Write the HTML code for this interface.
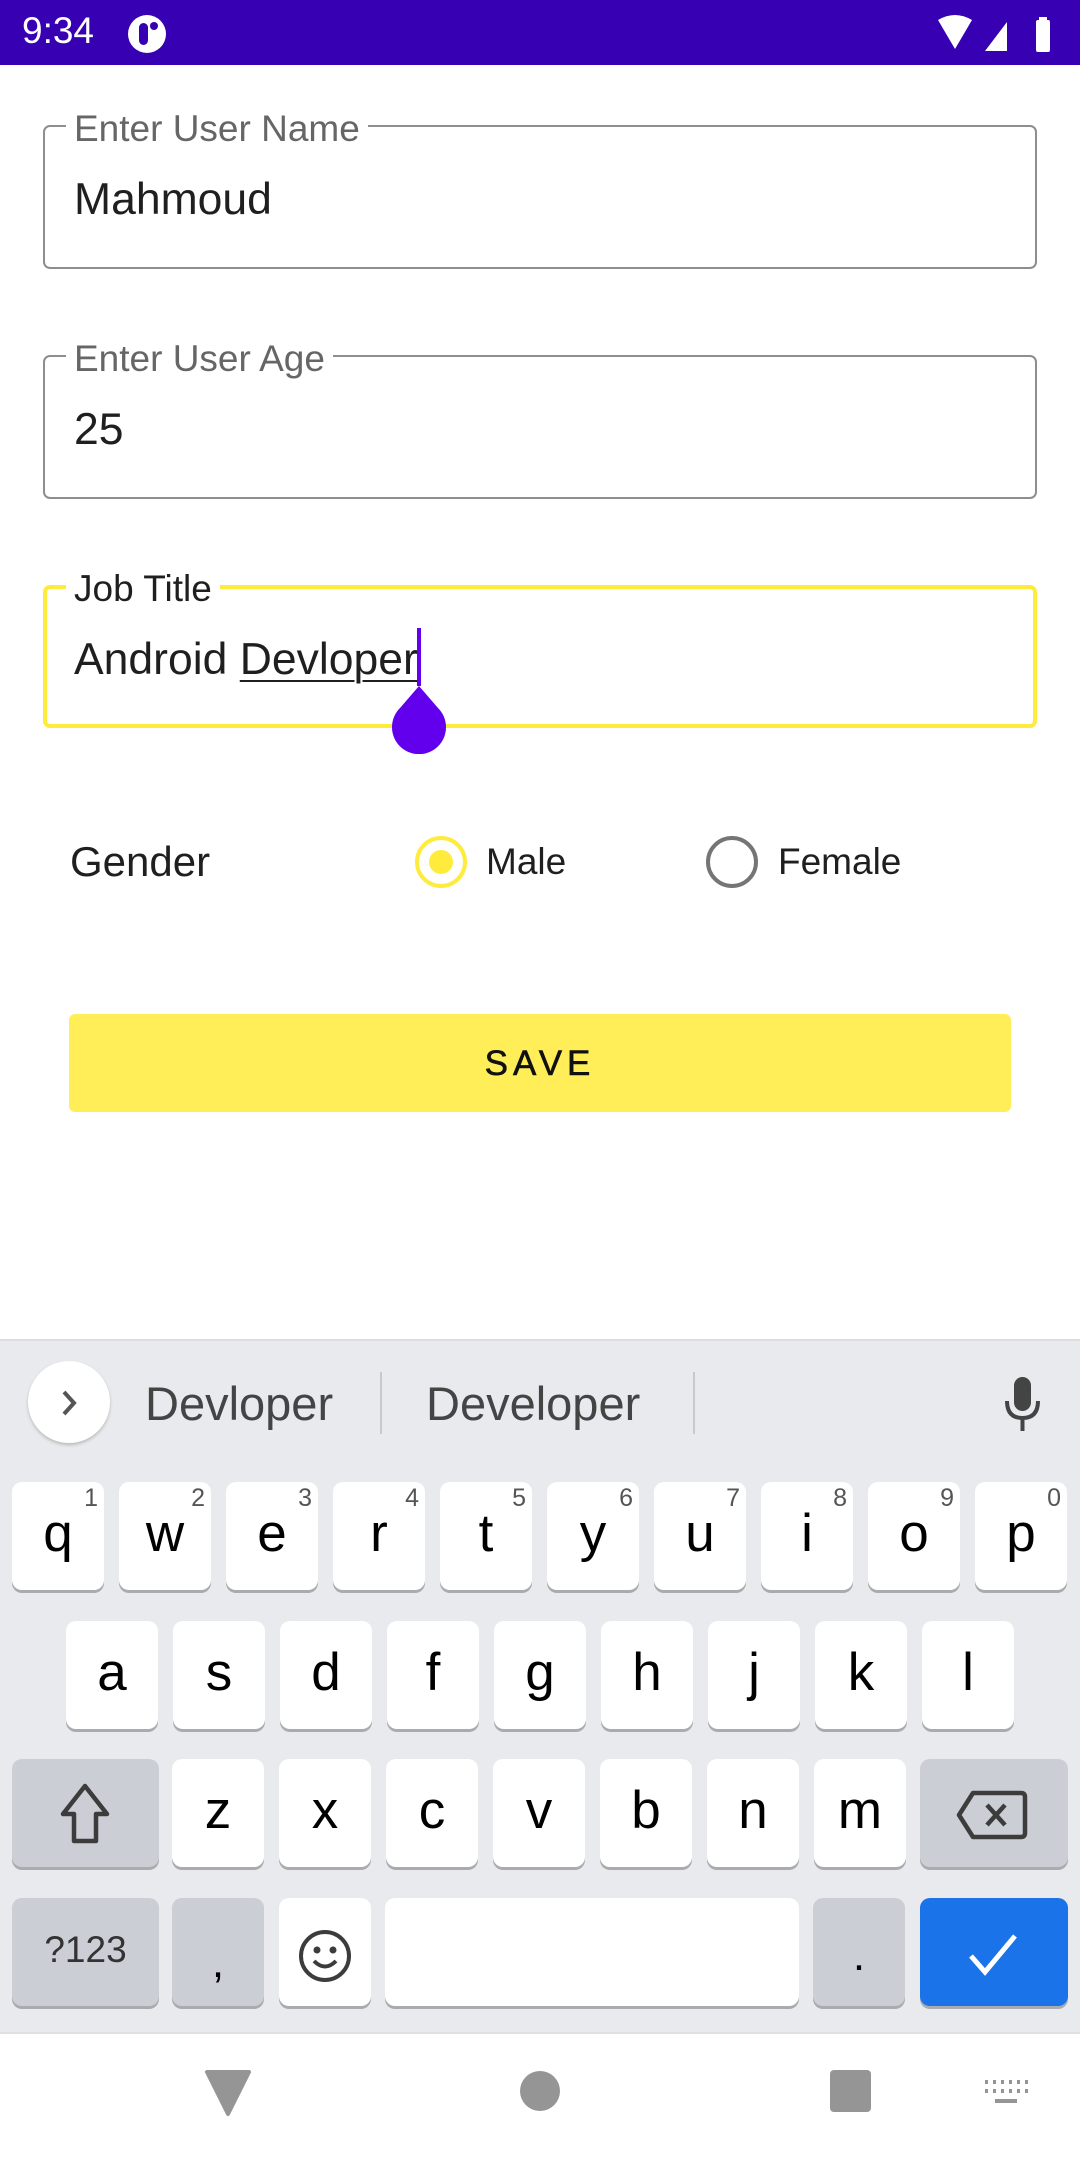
<!DOCTYPE html>
<html><head><meta charset="utf-8"><style>
*{margin:0;padding:0;box-sizing:border-box}
body{width:1080px;height:2160px;position:relative;background:#fff;font-family:"Liberation Sans",sans-serif;overflow:hidden}
.a{position:absolute}
.sb{left:0;top:0;width:1080px;height:65px;background:#3700B3}
.fld{left:43px;width:994px;height:144px;border:2.5px solid #8e8e8e;border-radius:7px}
.lbl{background:#fff;padding:0 8px;font-size:37px;color:#666;line-height:36px}
.val{font-size:44.5px;color:#1f1f1f;line-height:44px}
.kb{left:0;top:1339px;width:1080px;height:693px;background:#E8EAED;border-top:2px solid #dcdde0}
.k{background:#fff;border-radius:10px;box-shadow:0 3px 0 #a9abaf;height:108px;text-align:center;font-size:53px;line-height:104px;color:#000}
.k sup{position:absolute;right:6px;top:4px;font-size:25px;line-height:24px;color:#555}
.g{background:#CBCED4}
</style></head><body>
<div class="a sb"></div>
<div class="a" style="left:22px;top:11px;font-size:37px;color:#fff;line-height:40px">9:34</div>
<div class="a" style="left:128px;top:15px;width:38px;height:38px;border-radius:50%;background:#fff"></div>
<div class="a" style="left:139px;top:23px;width:9px;height:22px;border-radius:5px;background:#3700B3"></div>
<div class="a" style="left:150px;top:22px;width:8px;height:8px;border-radius:50%;background:#3700B3"></div>
<svg class="a" style="left:935px;top:14px" width="130" height="40"><path d="M3 6 Q20 -4 37 6 L20 35 Z" fill="#fff"/><path d="M50 37 L72 8 L72 37 Z" fill="#fff"/><rect x="101" y="6" width="14" height="32" rx="2" fill="#fff"/><rect x="104" y="3" width="8" height="4" fill="#fff"/></svg>

<div class="a fld" style="top:125px"></div>
<div class="a lbl" style="left:66px;top:111px">Enter User Name</div>
<div class="a val" style="left:74px;top:178px">Mahmoud</div>

<div class="a fld" style="top:355px"></div>
<div class="a lbl" style="left:66px;top:341px">Enter User Age</div>
<div class="a val" style="left:74px;top:408px">25</div>

<div class="a fld" style="top:585px;border:4px solid #FFEB3B;height:143px"></div>
<div class="a lbl" style="left:66px;top:571px;color:#1f1f1f">Job Title</div>
<div class="a val" style="left:74px;top:638px">Android <span style="text-decoration:underline;text-decoration-thickness:2px;text-underline-offset:6px">Devloper</span></div>
<div class="a" style="left:417px;top:628px;width:4px;height:58px;background:#6200EE"></div>
<svg class="a" style="left:390px;top:684px" width="58" height="70"><path d="M29 2 L48 24 A27 27 0 1 1 10 24 Z" fill="#6200EE"/></svg>

<div class="a" style="left:70px;top:840px;font-size:42px;color:#1f1f1f;line-height:44px">Gender</div>
<div class="a" style="left:415px;top:836px;width:52px;height:52px;border:4px solid #FFEB3B;border-radius:50%"></div>
<div class="a" style="left:429px;top:850px;width:24px;height:24px;background:#FFEB3B;border-radius:50%"></div>
<div class="a" style="left:486px;top:842px;font-size:37px;color:#1f1f1f;line-height:40px">Male</div>
<div class="a" style="left:706px;top:836px;width:52px;height:52px;border:4px solid #757575;border-radius:50%"></div>
<div class="a" style="left:778px;top:842px;font-size:37px;color:#1f1f1f;line-height:40px">Female</div>

<div class="a" style="left:69px;top:1014px;width:942px;height:98px;background:#FFEE58;border-radius:6px;text-align:center;font-size:35px;letter-spacing:5px;line-height:100px;color:#111;-webkit-text-stroke:0.6px #111">SAVE</div>

<div class="a kb"></div>
<div class="a" style="left:28px;top:1361px;width:82px;height:82px;border-radius:50%;background:#fff;box-shadow:0 2px 3px #bbb"></div>
<svg class="a" style="left:55px;top:1388px" width="28" height="30"><path d="M9 4 L19 15 L9 26" fill="none" stroke="#555" stroke-width="4"/></svg>
<div class="a" style="left:145px;top:1378px;font-size:47px;color:#444;line-height:52px">Devloper</div>
<div class="a" style="left:380px;top:1372px;width:2px;height:62px;background:#c8c9cc"></div>
<div class="a" style="left:426px;top:1378px;font-size:47px;color:#444;line-height:52px">Developer</div>
<div class="a" style="left:693px;top:1372px;width:2px;height:62px;background:#c8c9cc"></div>
<svg class="a" style="left:1000px;top:1375px" width="46" height="60"><rect x="14" y="2" width="17" height="34" rx="8.5" fill="#444"/><path d="M7 26 Q7 43 22.5 43 Q38 43 38 26" fill="none" stroke="#444" stroke-width="4"/><rect x="20.5" y="42" width="4" height="14" fill="#444"/></svg>

<div class="a k" style="left:12px;top:1482px;width:92px">q<sup>1</sup></div>
<div class="a k" style="left:119px;top:1482px;width:92px">w<sup>2</sup></div>
<div class="a k" style="left:226px;top:1482px;width:92px">e<sup>3</sup></div>
<div class="a k" style="left:333px;top:1482px;width:92px">r<sup>4</sup></div>
<div class="a k" style="left:440px;top:1482px;width:92px">t<sup>5</sup></div>
<div class="a k" style="left:547px;top:1482px;width:92px">y<sup>6</sup></div>
<div class="a k" style="left:654px;top:1482px;width:92px">u<sup>7</sup></div>
<div class="a k" style="left:761px;top:1482px;width:92px">i<sup>8</sup></div>
<div class="a k" style="left:868px;top:1482px;width:92px">o<sup>9</sup></div>
<div class="a k" style="left:975px;top:1482px;width:92px">p<sup>0</sup></div>

<div class="a k" style="left:66px;top:1621px;width:92px">a</div>
<div class="a k" style="left:173px;top:1621px;width:92px">s</div>
<div class="a k" style="left:280px;top:1621px;width:92px">d</div>
<div class="a k" style="left:387px;top:1621px;width:92px">f</div>
<div class="a k" style="left:494px;top:1621px;width:92px">g</div>
<div class="a k" style="left:601px;top:1621px;width:92px">h</div>
<div class="a k" style="left:708px;top:1621px;width:92px">j</div>
<div class="a k" style="left:815px;top:1621px;width:92px">k</div>
<div class="a k" style="left:922px;top:1621px;width:92px">l</div>

<div class="a k g" style="left:12px;top:1759px;width:147px"></div>
<svg class="a" style="left:52px;top:1780px" width="70" height="70"><path d="M33 6 L55 34 L44 34 L44 61 L22 61 L22 34 L11 34 Z" fill="none" stroke="#3c3c3c" stroke-width="4.5" stroke-linejoin="round"/></svg>
<div class="a k" style="left:172px;top:1759px;width:92px">z</div>
<div class="a k" style="left:279px;top:1759px;width:92px">x</div>
<div class="a k" style="left:386px;top:1759px;width:92px">c</div>
<div class="a k" style="left:493px;top:1759px;width:92px">v</div>
<div class="a k" style="left:600px;top:1759px;width:92px">b</div>
<div class="a k" style="left:707px;top:1759px;width:92px">n</div>
<div class="a k" style="left:814px;top:1759px;width:92px">m</div>
<div class="a k g" style="left:920px;top:1759px;width:148px"></div>
<svg class="a" style="left:955px;top:1785px" width="76" height="60"><path d="M18 8 L66 8 Q70 8 70 12 L70 48 Q70 52 66 52 L18 52 L4 30 Z" fill="none" stroke="#3c3c3c" stroke-width="4.5" stroke-linejoin="round"/><path d="M32 20 L50 40 M50 20 L32 40" stroke="#3c3c3c" stroke-width="4.5"/></svg>

<div class="a k g" style="left:12px;top:1898px;width:147px;font-size:37px;color:#333">?123</div>
<div class="a k g" style="left:172px;top:1898px;width:92px;font-size:44px;line-height:130px">,</div>
<div class="a k" style="left:279px;top:1898px;width:92px"></div>
<svg class="a" style="left:297px;top:1928px" width="56" height="56"><circle cx="28" cy="28" r="24" fill="none" stroke="#3c3c3c" stroke-width="4"/><circle cx="20" cy="22" r="3.5" fill="#3c3c3c"/><circle cx="36" cy="22" r="3.5" fill="#3c3c3c"/><path d="M17 33 Q28 44 39 33" fill="none" stroke="#3c3c3c" stroke-width="4"/></svg>
<div class="a k" style="left:385px;top:1898px;width:414px"></div>
<div class="a k g" style="left:813px;top:1898px;width:92px;font-size:44px;line-height:116px">.</div>
<div class="a k" style="left:920px;top:1898px;width:148px;background:#1A73E8"></div>
<svg class="a" style="left:965px;top:1930px" width="60" height="50"><path d="M6 26 L20 42 L50 6" fill="none" stroke="#fff" stroke-width="5"/></svg>

<div class="a" style="left:0;top:2032px;width:1080px;height:2px;background:#e0e0e0"></div>
<svg class="a" style="left:200px;top:2070px" width="60" height="50"><path d="M7 2 L49 2 L28 44 Z" fill="#959595" stroke="#959595" stroke-width="4" stroke-linejoin="round"/></svg>
<div class="a" style="left:520px;top:2071px;width:40px;height:40px;border-radius:50%;background:#959595"></div>
<div class="a" style="left:830px;top:2070px;width:41px;height:42px;border-radius:4px;background:#959595"></div>
<svg class="a" style="left:985px;top:2080px" width="44" height="30"><g fill="#959595"><rect x="0" y="0" width="3" height="4"/><rect x="8" y="0" width="3" height="4"/><rect x="16" y="0" width="3" height="4"/><rect x="24" y="0" width="3" height="4"/><rect x="32" y="0" width="3" height="4"/><rect x="40" y="0" width="3" height="4"/><rect x="0" y="9" width="3" height="4"/><rect x="8" y="9" width="3" height="4"/><rect x="16" y="9" width="3" height="4"/><rect x="24" y="9" width="3" height="4"/><rect x="32" y="9" width="3" height="4"/><rect x="40" y="9" width="3" height="4"/><rect x="10" y="19" width="22" height="4"/></g></svg>
</body></html>
